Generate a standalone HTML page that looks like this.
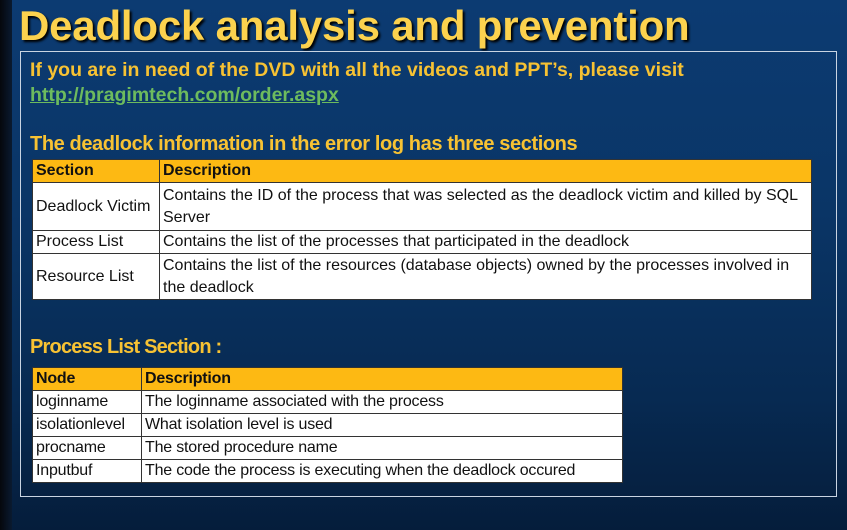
<!DOCTYPE html>
<html><head><style>
*{margin:0;padding:0;box-sizing:border-box}
body{width:847px;height:530px;overflow:hidden;position:relative;font-family:"Liberation Sans",sans-serif;
background:linear-gradient(180deg,#0c3b72 0%,#0a3566 40%,#072a52 75%,#051d3b 100%)}
.strip{position:absolute;left:0;top:0;width:12px;height:530px;background:linear-gradient(90deg,#05070c,#0a1a30)}
h1{position:absolute;left:19px;top:2px;font-size:42px;font-weight:bold;color:#fcd24e;text-shadow:2px 2px 2px #000;letter-spacing:-0.2px;white-space:nowrap}
.frame{position:absolute;left:20px;top:51px;width:817px;height:446px;border:1px solid #c9d4e2}
.y{position:absolute;color:#f7c233;font-weight:bold;white-space:nowrap}
a{position:absolute;left:30px;top:84px;color:#6dbb5e;font-weight:bold;font-size:19.5px;text-decoration:underline;white-space:nowrap}
table{position:absolute;border-collapse:collapse;background:#fff;font-size:16px;color:#111}
td{border:1px solid #333;padding:0 3px;vertical-align:middle;line-height:22px}
tr.h td{background:#fdb913;font-weight:bold;height:22px}
#t1{left:32px;top:159px;width:780px}
#t2{left:32px;top:367px;width:591px}
#t2 td{height:23px;font-size:16px;letter-spacing:-0.2px}
</style></head><body>
<div class="strip"></div>
<h1>Deadlock analysis and prevention</h1>
<div class="frame"></div>
<div class="y" style="left:30px;top:59px;font-size:19.5px">If you are in need of the DVD with all the videos and PPT’s, please visit</div>
<a>http://pragimtech.com/order.aspx</a>
<div class="y" style="left:30px;top:133px;font-size:20px;letter-spacing:-0.4px">The deadlock information in the error log has three sections</div>
<table id="t1">
<tr class="h"><td style="width:127px">Section</td><td>Description</td></tr>
<tr style="height:48px"><td>Deadlock Victim</td><td>Contains the ID of the process that was selected as the deadlock victim and killed by SQL Server</td></tr>
<tr style="height:22px"><td>Process List</td><td>Contains the list of the processes that participated in the deadlock</td></tr>
<tr style="height:46px"><td>Resource List</td><td>Contains the list of the resources (database objects) owned by the processes involved in the deadlock</td></tr>
</table>
<div class="y" style="left:30px;top:336px;font-size:20px;letter-spacing:-0.8px">Process List Section :</div>
<table id="t2">
<tr class="h"><td style="width:109px">Node</td><td>Description</td></tr>
<tr><td>loginname</td><td>The loginname associated with the process</td></tr>
<tr><td>isolationlevel</td><td>What isolation level is used</td></tr>
<tr><td>procname</td><td>The stored procedure name</td></tr>
<tr><td>Inputbuf</td><td>The code the process is executing when the deadlock occured</td></tr>
</table>
</body></html>
